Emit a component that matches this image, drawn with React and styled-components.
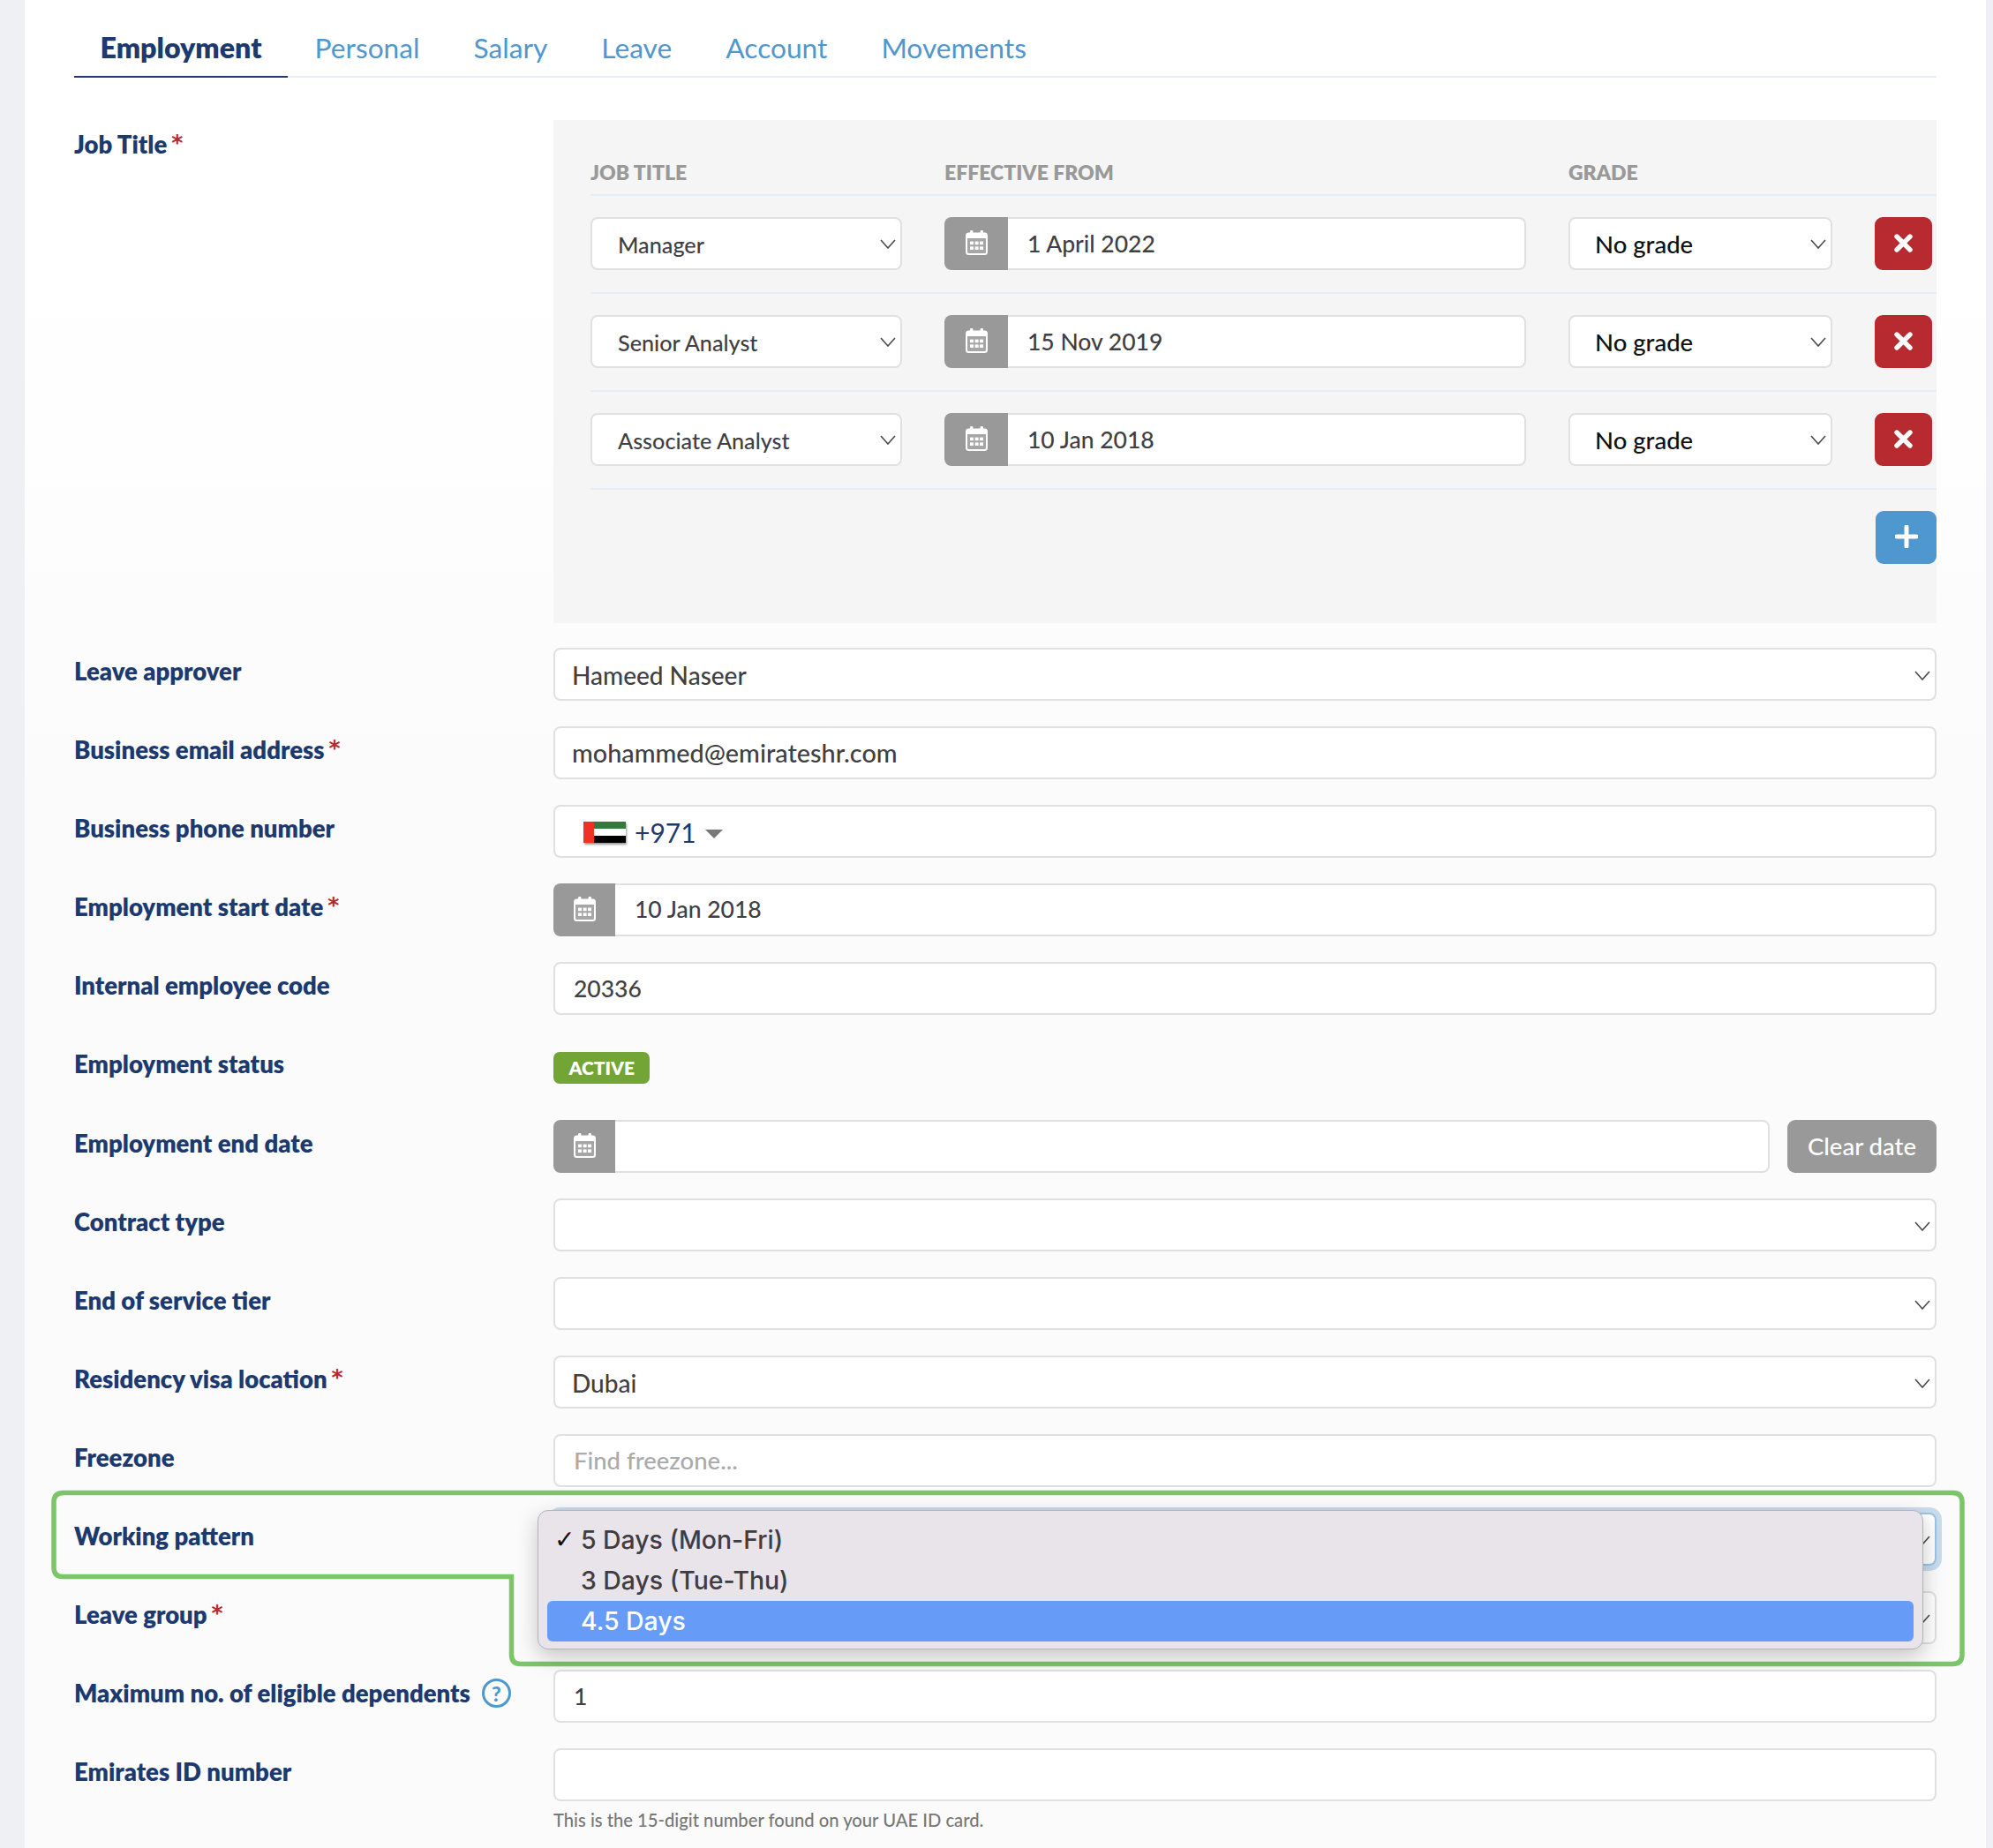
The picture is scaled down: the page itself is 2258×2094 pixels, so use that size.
import React from "react";
import styled, { createGlobalStyle } from "styled-components";

const GlobalStyle = createGlobalStyle`
  html, body {
    margin: 0;
    padding: 0;
    height: 2094px;
    overflow: hidden;
    background: #eff0f4;
  }
  body {
    font-family: "Lato", "Liberation Sans", sans-serif;
    font-weight: 500;
  }
`;

const NAVY = "#1d3a6e";
const LINE = "#e3eef7";

function Chevron() {
  return (
    <ChevronSvg viewBox="0 0 18 11">
      <polyline points="1,1 9,10 17,1" fill="none" stroke="#4a4a4d" strokeWidth="1.6" />
    </ChevronSvg>
  );
}

function CalendarIcon() {
  return (
    <svg width="25" height="28" viewBox="0 0 25 28">
      <rect x="5" y="0" width="3.4" height="6" rx="1.2" fill="#fff" />
      <rect x="16.6" y="0" width="3.4" height="6" rx="1.2" fill="#fff" />
      <rect x="1" y="3.5" width="23" height="23.5" rx="2.5" fill="#a6a6a6" stroke="#fff" strokeWidth="2" />
      <rect x="1" y="3.5" width="23" height="5.5" fill="#fff" />
      {[5, 10.6, 16].map((x) =>
        [12.6, 18.4].map((y) => <rect key={`${x}-${y}`} x={x} y={y} width="4" height="3.6" fill="#fff" />)
      )}
    </svg>
  );
}

function DateField({ value, addon }) {
  return (
    <DateWrap>
      <CalendarAddon $w={addon}>
        <CalendarIcon />
      </CalendarAddon>
      <DateInput>{value}</DateInput>
    </DateWrap>
  );
}

function Flag() {
  return (
    <FlagSvg viewBox="0 0 48 24">
      <rect width="48" height="8" y="0" fill="#36793c" />
      <rect width="48" height="8" y="8" fill="#fff" />
      <rect width="48" height="8" y="16" fill="#000" />
      <rect width="12" height="24" fill="#ee3124" />
    </FlagSvg>
  );
}

const jobs = [
  { title: "Manager", from: "1 April 2022" },
  { title: "Senior Analyst", from: "15 Nov 2019" },
  { title: "Associate Analyst", from: "10 Jan 2018" },
];

const tabs = ["Employment", "Personal", "Salary", "Leave", "Account", "Movements"];

function Row({ label, required, help, children }) {
  return (
    <FormRow>
      <Label>
        {label}
        {required && <Star>*</Star>}
        {help && <HelpDot>?</HelpDot>}
      </Label>
      <div>{children}</div>
    </FormRow>
  );
}

export default function App() {
  return (
    <Page>
      <GlobalStyle />
      <Card>
        <TabBar>
          {tabs.map((t, i) => (
            <Tab key={t} $active={i === 0}>
              {t}
            </Tab>
          ))}
        </TabBar>

        <Row label="Job Title" required>
          <Panel>
            <PanelHead>
              <HeadCell>Job title</HeadCell>
              <HeadCell>Effective from</HeadCell>
              <HeadCell>Grade</HeadCell>
            </PanelHead>
            {jobs.map((j) => (
              <JobRow key={j.title}>
                <SelectBox $pad="29px" $size="25.2px" $top="1px">
                  <span>{j.title}</span>
                  <Chevron />
                </SelectBox>
                <DateField value={j.from} addon="72px" />
                <SelectBox $pad="28px" $size="27.5px" $color="#111" $top="0">
                  <span>No grade</span>
                  <Chevron />
                </SelectBox>
                <IconButton $bg="#b72a2f">
                  <svg width="21" height="21" viewBox="0 0 21 21">
                    <path d="M3 3 L18 18 M18 3 L3 18" stroke="#fff" strokeWidth="5.4" strokeLinecap="round" />
                  </svg>
                </IconButton>
              </JobRow>
            ))}
            <AddRow>
              <IconButton $bg="#4f97cf" $wide>
                <svg width="26" height="26" viewBox="0 0 26 26">
                  <path d="M13 2 V24 M2 13 H24" stroke="#fff" strokeWidth="5" strokeLinecap="round" />
                </svg>
              </IconButton>
            </AddRow>
          </Panel>
        </Row>

        <Row label="Leave approver">
          <SelectBox>
            <span>Hameed Naseer</span>
            <Chevron />
          </SelectBox>
        </Row>
        <Row label="Business email address" required>
          <TextBox $size="28.8px">mohammed@emirateshr.com</TextBox>
        </Row>
        <Row label="Business phone number">
          <PhoneBox>
            <Flag />
            <DialCode>+971</DialCode>
            <Caret />
          </PhoneBox>
        </Row>
        <Row label="Employment start date" required>
          <DateField value="10 Jan 2018" />
        </Row>
        <Row label="Internal employee code">
          <TextBox $left="21px" $size="26.5px">
            20336
          </TextBox>
        </Row>
        <StatusRow>
          <Label>Employment status</Label>
          <div>
            <Badge>Active</Badge>
          </div>
        </StatusRow>
        <Row label="Employment end date">
          <DateWithClear>
            <DateField value="" />
            <ClearButton>Clear date</ClearButton>
          </DateWithClear>
        </Row>
        <Row label="Contract type">
          <SelectBox>
            <span />
            <Chevron />
          </SelectBox>
        </Row>
        <Row label="End of service tier">
          <SelectBox>
            <span />
            <Chevron />
          </SelectBox>
        </Row>
        <Row label="Residency visa location" required>
          <SelectBox>
            <span>Dubai</span>
            <Chevron />
          </SelectBox>
        </Row>
        <Row label="Freezone">
          <TextBox $left="21px" $color="#aaa" $size="27.5px">
            Find freezone...
          </TextBox>
        </Row>
        <Row label="Working pattern">
          <MenuAnchor>
            <SelectBox $focus>
              <span />
              <Chevron />
            </SelectBox>
            <Menu>
              <MenuItem>
                <Check>✓</Check>5 Days (Mon-Fri)
              </MenuItem>
              <MenuItem>
                <Check />3 Days (Tue-Thu)
              </MenuItem>
              <MenuItem $selected>
                <Check />4.5 Days
              </MenuItem>
            </Menu>
          </MenuAnchor>
        </Row>
        <Row label="Leave group" required>
          <SelectBox>
            <span />
            <Chevron />
          </SelectBox>
        </Row>
        <Row label="Maximum no. of eligible dependents" help>
          <TextBox $left="21px" $size="26.5px">
            1
          </TextBox>
        </Row>
        <Row label="Emirates ID number">
          <TextBox />
          <Hint>This is the 15-digit number found on your UAE ID card.</Hint>
        </Row>
      </Card>

      {/* green annotation drawn on top of the form, the dropdown sits above it */}
      <Annotation viewBox="0 0 2258 2094">
        <path
          d="M72 1691.5 H2212 Q2223 1691.5 2223 1702 V1875 Q2223 1885.5 2212 1885.5 H590 Q579.5 1885.5 579.5 1875 V1786.5 H71 Q61 1786.5 61 1776 V1702 Q61 1691.5 72 1691.5 Z"
          fill="none"
          stroke="#7cc66a"
          strokeWidth="5.5"
        />
      </Annotation>
    </Page>
  );
}

const Page = styled.div`
  position: relative;
  width: 2258px;
  height: 2094px;
  padding-left: 28px;
  padding-right: 8px;
  box-sizing: border-box;
  overflow: hidden;
`;

const Card = styled.div`
  height: 2094px;
  box-sizing: border-box;
  padding: 0 56px;
  background: linear-gradient(#ffffff 0, #ffffff 300px, #fbfbfc 900px);
`;

const TabBar = styled.div`
  display: flex;
  height: 88px;
  box-sizing: border-box;
  border-bottom: 2px solid ${LINE};
  margin-bottom: 48px;
`;

const Tab = styled.div`
  padding: 34px ${(p) => (p.$active ? "29.5px" : "30.5px")} 0;
  margin-bottom: -2px;
  font-size: ${(p) => (p.$active ? "32.2px" : "31.7px")};
  line-height: 40px;
  font-weight: ${(p) => (p.$active ? 800 : 400)};
  color: ${(p) => (p.$active ? NAVY : "#4f97cf")};
  border-bottom: 2px solid ${(p) => (p.$active ? NAVY : "transparent")};
`;

const FormRow = styled.div`
  display: grid;
  grid-template-columns: 543px 1fr;
  margin-bottom: 28.5px;
`;

const StatusRow = styled(FormRow)`
  height: 61.5px;
`;

const Label = styled.div`
  display: flex;
  align-items: flex-start;
  padding-top: 10.5px;
  font-size: 27.5px;
  line-height: 34px;
  font-weight: 800;
  color: ${NAVY};
`;

const Star = styled.span`
  margin-left: 5px;
  color: #b72a2f;
  font-family: "DejaVu Sans", sans-serif;
  font-size: 25px;
  font-weight: 700;
  line-height: 30px;
`;

const HelpDot = styled.span`
  display: flex;
  align-items: center;
  justify-content: center;
  width: 33px;
  height: 33px;
  box-sizing: border-box;
  margin-left: 13px;
  border: 3.5px solid #4f97cf;
  border-radius: 50%;
  color: #4f97cf;
  font-size: 23px;
  font-weight: 900;
`;

const Panel = styled.div`
  height: 570px;
  box-sizing: border-box;
  margin-bottom: -0.8px;
  padding-left: 42px;
  background: #f5f5f5;
`;

const JOB_COLS = "353px 659px 299px 65px";

const PanelHead = styled.div`
  display: grid;
  grid-template-columns: ${JOB_COLS};
  column-gap: 48px;
  height: 85.5px;
  box-sizing: border-box;
  padding-top: 44px;
  border-bottom: 2px solid ${LINE};
`;

const HeadCell = styled.div`
  font-size: 23px;
  line-height: 30px;
  font-weight: 800;
  text-transform: uppercase;
  color: #999;
`;

const JobRow = styled.div`
  display: grid;
  grid-template-columns: ${JOB_COLS};
  column-gap: 48px;
  padding: 24.25px 0;
  border-bottom: 2px solid ${LINE};
`;

const SelectBox = styled.div`
  display: flex;
  align-items: center;
  justify-content: space-between;
  height: 60.5px;
  box-sizing: border-box;
  padding: ${(p) => p.$top || "3px"} 5px 0 ${(p) => p.$pad || "19px"};
  background: #fff;
  border: 2px solid ${(p) => (p.$focus ? "#9cc4e4" : "#e0e0e0")};
  border-radius: 8px;
  font-size: ${(p) => p.$size || "28px"};
  color: ${(p) => p.$color || "#3f3f44"};
  box-shadow: ${(p) => (p.$focus ? "0 0 0 6px #c9dced" : "none")};
`;

const ChevronSvg = styled.svg`
  width: 18px;
  height: 11px;
  flex: none;
`;

const DateWrap = styled.div`
  display: flex;
  flex: 1;
  height: 60.5px;
`;

const CalendarAddon = styled.div`
  display: flex;
  align-items: center;
  justify-content: center;
  width: ${(p) => p.$w || "70px"};
  padding-bottom: 2px;
  box-sizing: border-box;
  flex: none;
  background: #999;
  border-radius: 8px 0 0 8px;
`;

const DateInput = styled.div`
  flex: 1;
  display: flex;
  align-items: center;
  padding-left: 22px;
  padding-bottom: 1px;
  background: #fff;
  border: 2px solid #e0e0e0;
  border-left: none;
  border-radius: 0 8px 8px 0;
  font-size: 26.5px;
  color: #3f3f44;
`;

const IconButton = styled.div`
  display: flex;
  align-items: center;
  justify-content: center;
  box-sizing: border-box;
  padding-bottom: 2px;
  width: ${(p) => (p.$wide ? "69px" : "65px")};
  height: 60.5px;
  background: ${(p) => p.$bg};
  border-radius: 9px;
`;

const AddRow = styled.div`
  display: flex;
  justify-content: flex-end;
  padding-top: 24px;
`;

const TextBox = styled.div`
  display: flex;
  align-items: center;
  height: 60.5px;
  box-sizing: border-box;
  padding-left: ${(p) => p.$left || "19px"};
  background: #fff;
  border: 2px solid #e0e0e0;
  border-radius: 8px;
  font-size: ${(p) => p.$size || "28px"};
  color: ${(p) => p.$color || "#3f3f44"};
`;

const PhoneBox = styled(TextBox)`
  padding-left: 32px;
  padding-top: 3px;
`;

const FlagSvg = styled.svg`
  width: 48px;
  height: 24px;
  flex: none;
  filter: drop-shadow(1px 2px 1px rgba(0, 0, 0, 0.4));
`;

const DialCode = styled.span`
  margin-left: 10px;
  font-size: 30px;
  font-weight: 400;
  color: ${NAVY};
`;

const Caret = styled.span`
  width: 0;
  height: 0;
  margin-left: 10px;
  margin-top: 3px;
  border-left: 10px solid transparent;
  border-right: 10px solid transparent;
  border-top: 10px solid #777;
`;

const Badge = styled.span`
  display: inline-block;
  margin-top: 13px;
  padding: 0 17.5px;
  height: 36px;
  line-height: 36px;
  border-radius: 7px;
  background: #72a536;
  color: #fff;
  font-size: 21px;
  font-weight: 800;
  text-transform: uppercase;
`;

const DateWithClear = styled.div`
  display: flex;
  gap: 20px;
`;

const ClearButton = styled.div`
  display: flex;
  align-items: center;
  justify-content: center;
  width: 169px;
  height: 60.5px;
  flex: none;
  background: #999;
  border-radius: 9px;
  color: #fff;
  font-size: 27.5px;
`;

const MenuAnchor = styled.div`
  position: relative;
`;

const Menu = styled.div`
  position: absolute;
  z-index: 2;
  top: -3px;
  left: -18px;
  right: 15px;
  box-sizing: border-box;
  height: 158px;
  padding: 10px 10px;
  background: #e8e4ea;
  border: 1px solid #b5b3b8;
  border-radius: 12px;
  box-shadow: 0 8px 24px rgba(0, 0, 0, 0.22);
  font-family: "Inter", "Liberation Sans", sans-serif;
`;

const MenuItem = styled.div`
  display: flex;
  align-items: center;
  height: 46px;
  padding-left: 8px;
  border-radius: 6px;
  font-size: 28.4px;
  color: ${(p) => (p.$selected ? "#fff" : "#3f3d42")};
  background: ${(p) => (p.$selected ? "#669cf8" : "transparent")};
`;

const Check = styled.span`
  width: 30px;
  flex: none;
  font-family: "DejaVu Sans", sans-serif;
  font-size: 28px;
  font-weight: 700;
  color: #111;
`;

const Hint = styled.div`
  margin-top: 8px;
  font-size: 20.2px;
  line-height: 26px;
  color: #777;
`;

const Annotation = styled.svg`
  position: absolute;
  top: 0;
  left: 0;
  width: 2258px;
  height: 2094px;
  z-index: 1;
  pointer-events: none;
`;
